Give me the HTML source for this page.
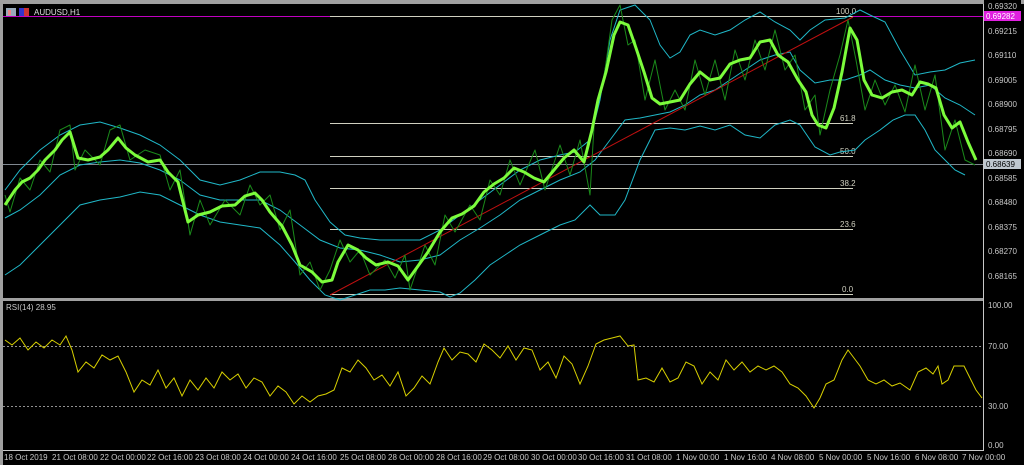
<!DOCTYPE html>
<html><head><meta charset="utf-8"><style>
html,body{margin:0;padding:0;background:#000;width:1024px;height:465px;overflow:hidden}
svg{display:block}
text{font-family:"Liberation Sans",sans-serif;font-size:8px}
</style></head><body>
<svg width="1024" height="465" viewBox="0 0 1024 465">
<rect x="0" y="0" width="1024" height="465" fill="#000"/>
<rect x="0" y="0" width="1024" height="4" fill="#a0a0a0"/>
<rect x="0" y="0" width="3" height="465" fill="#a0a0a0"/>
<line x1="983.5" y1="4" x2="983.5" y2="450" stroke="#c8c8c8"/>
<line x1="3" y1="450.5" x2="984" y2="450.5" stroke="#c8c8c8"/>
<rect x="3" y="298" width="981" height="3" fill="#a0a0a0"/>
<rect x="6" y="8" width="10" height="8" fill="#9ab"/><rect x="8" y="10" width="3" height="5" fill="#e88"/>
<rect x="19" y="8" width="10" height="8" fill="#33c"/><rect x="24" y="8" width="5" height="8" fill="#c33"/>
<text x="34" y="15" fill="#e0e0e0">AUDUSD,H1</text>
<line x1="3" y1="16.5" x2="983" y2="16.5" stroke="#c000c0"/>
<line x1="3" y1="164.5" x2="983" y2="164.5" stroke="#808890"/>
<g stroke="#d0d0c0" stroke-width="1">
<line x1="330" y1="16.5" x2="853" y2="16.5"/><line x1="330" y1="123.5" x2="853" y2="123.5"/>
<line x1="330" y1="156.5" x2="853" y2="156.5"/><line x1="330" y1="188.5" x2="853" y2="188.5"/>
<line x1="330" y1="229.5" x2="853" y2="229.5"/><line x1="330" y1="294.5" x2="853" y2="294.5"/>
</g>
<g fill="#d0d0c0"><text x="836" y="14">100.0</text><text x="840" y="121">61.8</text><text x="840" y="154">50.0</text><text x="840" y="186">38.2</text><text x="840" y="227">23.6</text><text x="842" y="292">0.0</text></g>
<g fill="none" stroke="#20b8c8" stroke-width="1">
<polyline points="5,190 20,170 40,150 60,135 80,125 100,122 120,128 140,135 160,145 180,160 200,180 220,185 240,180 260,172 280,172 295,175 305,180 315,200 330,222 345,235 360,238 380,240 400,240 420,240 440,230 460,215 480,200 500,185 520,170 540,160 560,155 575,152 590,140 600,100 610,40 620,10 635,5 650,20 660,45 670,58 680,52 690,35 700,30 715,35 730,30 745,20 760,12 775,22 790,30 800,40 810,30 825,20 845,18 860,10 870,15 885,22 900,50 915,75 930,72 945,70 960,63 975,60"/>
<polyline points="5,218 20,210 40,195 60,175 80,165 100,162 120,160 140,163 160,170 180,180 200,195 220,200 240,200 260,200 280,210 300,225 320,240 340,248 360,250 380,255 400,262 420,260 440,255 460,240 480,228 500,215 520,200 540,190 560,180 580,172 595,160 610,140 625,120 640,118 655,115 670,112 685,105 700,95 715,90 730,80 745,70 760,60 775,55 790,52 800,70 815,83 830,80 845,80 860,75 870,70 885,80 900,85 915,88 930,85 945,98 960,105 975,115"/>
<polyline points="5,275 20,265 40,245 60,225 80,205 100,200 120,197 140,192 160,195 180,205 200,215 220,222 240,225 260,228 280,245 295,262 310,280 325,295 340,300 355,295 370,290 385,290 400,288 420,290 440,292 450,297 460,293 475,280 490,265 505,255 520,245 540,235 560,225 575,220 590,205 600,215 615,215 625,200 640,160 655,130 670,128 685,130 700,126 715,130 730,125 745,135 760,138 775,125 790,120 800,125 815,147 830,155 840,152 855,150 865,140 880,130 893,120 905,115 915,115 925,130 935,150 945,160 955,170 965,175"/>
</g>
<line x1="330" y1="295" x2="853" y2="17" stroke="#c01010" stroke-width="1"/>
<g fill="none" stroke-linejoin="round">
<polyline stroke="#1a8a1a" stroke-width="1" points="5,195 10,212 20,178 30,190 40,160 50,172 60,130 70,125 75,170 85,150 100,165 110,130 120,125 130,160 145,150 160,155 170,190 180,170 190,235 200,200 210,225 225,200 240,215 250,185 260,205 270,195 280,230 290,210 300,275 310,262 320,290 330,270 340,240 350,262 360,250 370,275 385,260 395,278 405,255 410,290 425,245 435,265 445,215 455,232 470,205 480,220 490,180 500,195 510,160 520,185 535,150 545,190 560,145 570,175 580,140 590,195 595,110 600,95 605,70 612,20 620,5 628,45 635,40 645,100 655,60 665,110 675,90 685,110 695,60 705,95 715,60 725,100 735,50 745,80 755,40 765,70 775,30 785,70 795,55 805,110 815,95 820,135 830,90 840,55 848,20 856,60 865,110 875,80 885,105 895,85 905,112 915,65 925,110 935,75 945,150 955,120 965,160 975,165"/>
<polyline stroke="#7cfc3c" stroke-width="3" points="5,205 15,190 22,182 30,178 38,170 45,160 55,150 62,140 70,132 78,158 88,160 100,157 108,150 118,138 126,148 135,155 148,162 160,160 168,172 178,182 188,222 198,215 210,212 222,206 235,205 245,196 255,193 262,200 270,212 282,226 292,245 300,265 312,272 322,282 332,280 338,262 348,245 358,250 366,258 376,265 388,262 398,266 408,280 418,266 428,252 440,232 452,218 462,214 474,206 484,192 494,184 504,178 514,168 524,172 534,178 544,182 554,170 564,158 574,150 584,162 592,130 598,100 606,72 614,35 620,22 628,25 636,48 644,72 652,98 660,104 670,102 680,100 690,84 700,72 710,80 720,78 730,64 740,60 750,58 760,42 770,40 778,55 788,62 798,80 806,92 812,115 818,125 826,128 834,108 842,72 850,28 857,40 864,80 872,95 882,98 892,92 902,90 912,95 920,82 928,84 936,88 944,115 952,128 960,122 968,142 976,160"/>
</g>
<rect x="984" y="0" width="40" height="465" fill="#000"/>
<rect x="1021" y="0" width="3" height="4" fill="#a0a0a0"/>
<line x1="983.5" y1="4" x2="983.5" y2="450" stroke="#c8c8c8"/>
<rect x="984" y="11" width="37" height="10" fill="#e020e0"/><text x="986" y="19" fill="#ffffff">0.69282</text>
<rect x="984" y="159" width="37" height="10" fill="#c0c8d0"/><text x="986" y="167" fill="#000000">0.68639</text>
<g fill="#c8c8c8"><text x="988" y="9">0.69320</text><text x="988" y="34">0.69215</text><text x="988" y="58">0.69110</text><text x="988" y="83">0.69005</text><text x="988" y="107">0.68900</text><text x="988" y="132">0.68795</text><text x="988" y="156">0.68690</text><text x="988" y="181">0.68585</text><text x="988" y="205">0.68480</text><text x="988" y="230">0.68375</text><text x="988" y="254">0.68270</text><text x="988" y="279">0.68165</text></g>
<text x="6" y="310" fill="#c8c8c8">RSI(14) 28.95</text>
<g stroke="#909090" stroke-dasharray="2,2"><line x1="3" y1="346.5" x2="983" y2="346.5"/><line x1="3" y1="406.5" x2="983" y2="406.5"/></g>
<g fill="#c8c8c8"><text x="988" y="308">100.00</text><text x="988" y="349">70.00</text><text x="988" y="409">30.00</text><text x="988" y="448">0.00</text></g>
<polyline fill="none" stroke="#d8d000" stroke-width="1" points="5,340 12,345 20,338 28,350 36,342 44,348 52,340 60,345 66,336 72,350 78,372 86,362 94,368 102,355 110,360 118,356 126,372 134,392 142,380 150,385 158,370 166,388 174,378 182,396 190,380 198,390 206,378 214,388 222,372 230,380 238,374 246,388 254,378 262,382 270,396 278,386 286,392 294,404 302,396 310,402 318,396 326,394 334,390 342,368 350,372 358,360 366,368 374,380 382,375 390,386 398,372 406,396 414,388 422,376 430,384 438,362 444,348 452,360 460,352 468,354 476,362 484,344 492,350 500,358 508,346 516,360 524,348 532,350 540,370 548,362 556,378 564,356 572,364 580,384 588,366 596,344 604,340 612,338 620,336 628,346 634,345 638,380 646,378 654,382 662,368 670,382 678,378 686,362 694,366 702,384 710,372 718,380 726,360 734,370 742,362 750,372 758,366 766,370 774,366 782,372 790,384 798,388 806,396 814,408 820,398 826,384 834,380 842,360 848,350 854,358 860,366 868,380 876,384 884,380 892,386 900,383 910,390 918,372 926,368 933,374 938,366 942,384 948,380 954,366 964,366 970,378 976,390 982,398"/>
<g fill="#c8c8c8"><text x="4" y="460">18 Oct 2019</text><text x="52" y="460">21 Oct 08:00</text><text x="100" y="460">22 Oct 00:00</text><text x="147" y="460">22 Oct 16:00</text><text x="195" y="460">23 Oct 08:00</text><text x="243" y="460">24 Oct 00:00</text><text x="291" y="460">24 Oct 16:00</text><text x="340" y="460">25 Oct 08:00</text><text x="388" y="460">28 Oct 00:00</text><text x="436" y="460">28 Oct 16:00</text><text x="483" y="460">29 Oct 08:00</text><text x="531" y="460">30 Oct 00:00</text><text x="578" y="460">30 Oct 16:00</text><text x="626" y="460">31 Oct 08:00</text><text x="676" y="460">1 Nov 00:00</text><text x="724" y="460">1 Nov 16:00</text><text x="771" y="460">4 Nov 08:00</text><text x="819" y="460">5 Nov 00:00</text><text x="867" y="460">5 Nov 16:00</text><text x="915" y="460">6 Nov 08:00</text><text x="962" y="460">7 Nov 00:00</text></g>
</svg>
</body></html>
